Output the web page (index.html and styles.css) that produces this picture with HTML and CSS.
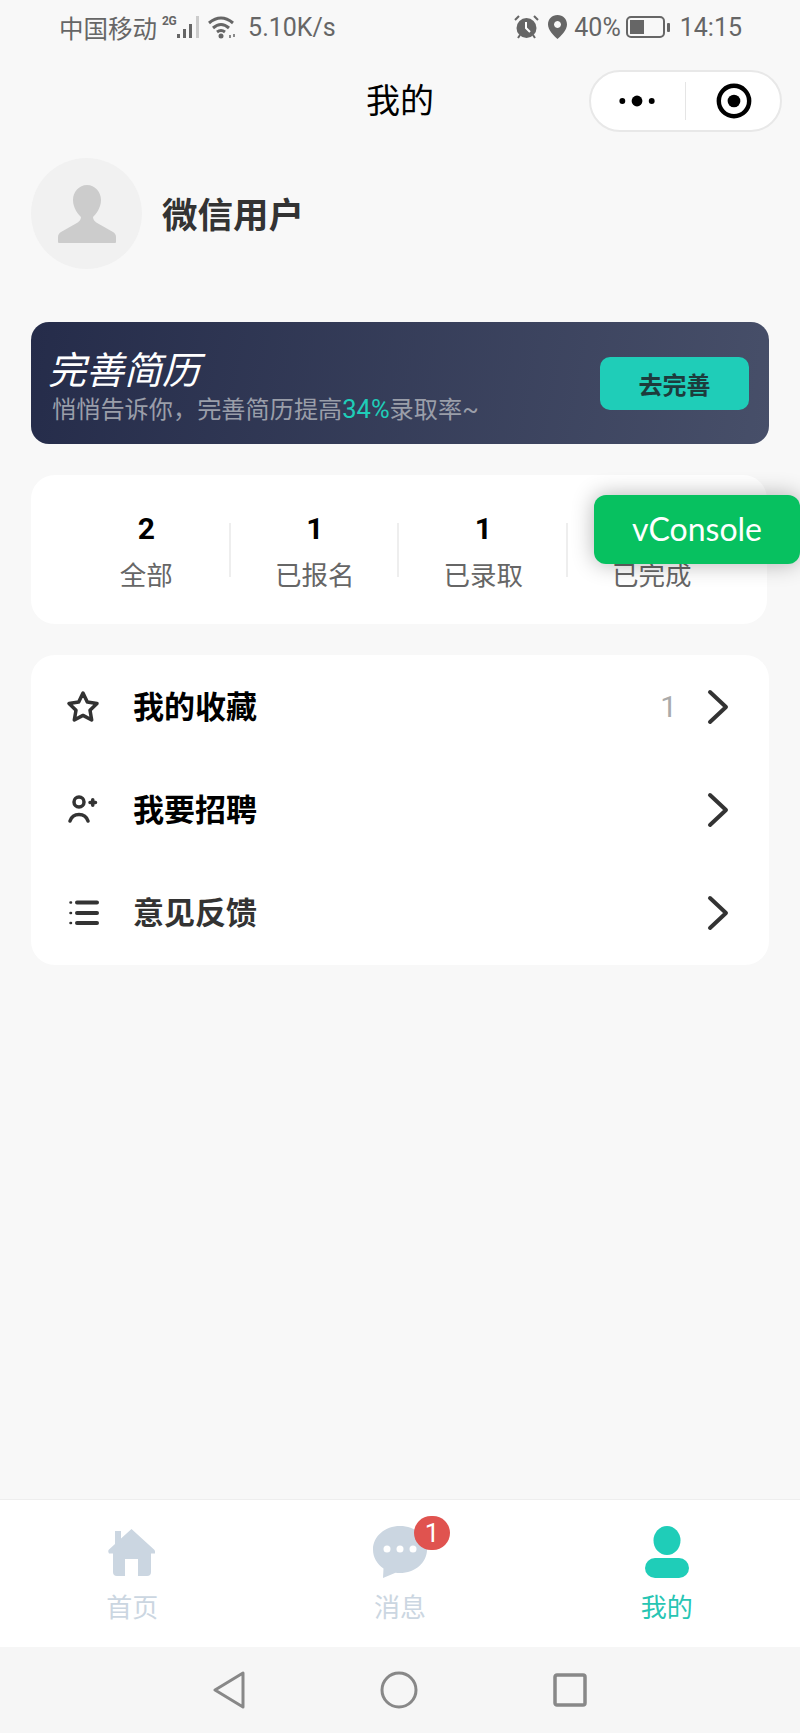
FILE: index.html
```html
<!DOCTYPE html>
<html lang="zh-CN">
<head>
    <meta charset="UTF-8">
    <meta name="viewport" content="width=device-width, initial-scale=1.0">
    <title>我的</title>
    <link rel="stylesheet" href="styles.css">
</head>
<body>
<div class="page">
    <div class="status-bar">
        <div class="status-group">
            <span class="carrier">中国移动</span>
            <span class="net-type">2G</span>
            <svg class="ic-signal" width="23" height="24" viewBox="0 0 23 24">
                <rect x="0" y="19" width="3" height="4" fill="#666"/>
                <rect x="6" y="14" width="3" height="9" fill="#666"/>
                <rect x="12" y="9" width="3" height="14" fill="#666"/>
                <rect x="19" y="1" width="3" height="22" fill="#ccc"/>
            </svg>
            <svg class="ic-wifi" width="28" height="24" viewBox="0 0 28 24" fill="none" stroke="#666" stroke-width="3">
                <path d="M1 8 Q13 -2 25 8"/>
                <path d="M5 13 Q13 6 21 13"/>
                <path d="M9 17 Q13 14 17 17"/>
                <circle cx="13" cy="21" r="2.5" fill="#666" stroke="none"/>
                <path d="M22 20 v3 M26 19 v3" stroke-width="1.5"/>
            </svg>
            <span class="speed">5.10K/s</span>
        </div>
        <div class="status-group">
            <svg class="ic-alarm" width="25" height="24" viewBox="0 0 25 24">
                <circle cx="12.5" cy="13" r="10" fill="#666"/>
                <path d="M12 7 V13 L16 17" stroke="#fff" stroke-width="2" fill="none"/>
                <path d="M1 5 L5 1 M24 5 L20 1 M4 23 L6 20 M21 23 L19 20" stroke="#666" stroke-width="2"/>
            </svg>
            <svg class="ic-pin" width="19" height="24" viewBox="0 0 19 24">
                <path fill-rule="evenodd" fill="#666" d="M9.5 0 C15 0 19 4 19 9.5 C19 15 13 21 9.5 24 C6 21 0 15 0 9.5 C0 4 4 0 9.5 0Z M9.5 6 a3.5 3.5 0 1 0 .01 0Z"/>
            </svg>
            <span class="battery-text">40%</span>
            <svg class="ic-battery" width="44" height="24" viewBox="0 0 44 24">
                <rect x="1" y="2" width="37" height="20" rx="4" fill="none" stroke="#666" stroke-width="2"/>
                <rect x="4" y="5" width="14" height="14" fill="#666"/>
                <rect x="41" y="8" width="3" height="9" rx="1" fill="#666"/>
            </svg>
            <span class="clock">14:15</span>
        </div>
    </div>

    <div class="title-bar">
        <span></span>
        <h1 class="title">我的</h1>
        <div class="capsule">
            <svg width="96" height="60" viewBox="0 0 96 60">
                <circle cx="32" cy="30" r="3" fill="#000"/>
                <circle cx="47" cy="30" r="5.5" fill="#000"/>
                <circle cx="62" cy="30" r="3" fill="#000"/>
            </svg>
            <i class="capsule-line"></i>
            <svg width="96" height="60" viewBox="0 0 96 60">
                <circle cx="49" cy="30" r="15.5" fill="none" stroke="#000" stroke-width="4.5"/>
                <circle cx="49" cy="30" r="6.5" fill="#000"/>
            </svg>
        </div>
    </div>

    <main class="content">
        <section class="profile">
            <div class="avatar">
                <svg width="58" height="58" viewBox="0 0 58 58">
                    <path fill="#ccc" d="M29 0 C37 0 43 7 43 15 C43 23 38 29 35 32 C35 35 37 37 40 38.500 L55 47 C57 48 58 50 58 52 V57 Q58 58 57 58 H1 Q0 58 0 57 V52 C0 50 1 48 3 47 L18 38.500 C21 37 23 35 23 32 C20 29 15 23 15 15 C15 7 21 0 29 0Z"/>
                </svg>
            </div>
            <span class="user-name">微信用户</span>
        </section>

        <section class="resume-banner">
            <div class="resume-info">
                <div class="resume-title">完善简历</div>
                <div class="resume-sub">悄悄告诉你，完善简历提高<span class="accent">34%</span>录取率~</div>
            </div>
            <button class="resume-btn">去完善</button>
        </section>

        <section class="stats">
            <div class="stat"><b>2</b><span>全部</span></div>
            <div class="stat"><b>1</b><span>已报名</span></div>
            <div class="stat"><b>1</b><span>已录取</span></div>
            <div class="stat"><b>1</b><span>已完成</span></div>
        </section>

        <section class="menu">
            <div class="menu-row">
                <svg class="menu-icon" width="36" height="34" viewBox="0 0 36 34" fill="none" stroke="#333" stroke-width="3.500" stroke-linejoin="round">
                    <path d="M18 3 L22.300 12 32 13.400 25 20.200 26.700 30 18 25.400 9.300 30 11 20.200 4 13.400 13.700 12Z"/>
                </svg>
                <span class="menu-text">我的收藏</span>
                <span class="menu-count">1</span>
                <svg class="chevron" width="22" height="36" viewBox="0 0 22 36" fill="none" stroke="#333" stroke-width="4" stroke-linecap="round" stroke-linejoin="round">
                    <path d="M3 3 L19 18 3 33"/>
                </svg>
            </div>
            <div class="menu-row">
                <svg class="menu-icon" width="36" height="34" viewBox="0 0 36 34" fill="none" stroke="#333" stroke-width="3.500" stroke-linecap="round">
                    <circle cx="14" cy="9" r="5"/>
                    <path d="M5 28 a9.500 9.500 0 0 1 18 0"/>
                    <path d="M25 9.500 h5.500 M27.750 6.750 v5.500"/>
                </svg>
                <span class="menu-text">我要招聘</span>
                <svg class="chevron" width="22" height="36" viewBox="0 0 22 36" fill="none" stroke="#333" stroke-width="4" stroke-linecap="round" stroke-linejoin="round">
                    <path d="M3 3 L19 18 3 33"/>
                </svg>
            </div>
            <div class="menu-row">
                <svg class="menu-icon" width="36" height="34" viewBox="0 0 36 34" fill="none" stroke="#333" stroke-width="4" stroke-linecap="round">
                    <path d="M12 6.500 H32 M12 17 H32 M12 27 H32"/>
                    <path d="M5.500 6.500 h.5 M5.500 17 h.5 M5.500 27 h.5" stroke-width="2.500"/>
                </svg>
                <span class="menu-text menu-text-soft">意见反馈</span>
                <svg class="chevron" width="22" height="36" viewBox="0 0 22 36" fill="none" stroke="#333" stroke-width="4" stroke-linecap="round" stroke-linejoin="round">
                    <path d="M3 3 L19 18 3 33"/>
                </svg>
            </div>
        </section>
    </main>

    <nav class="tabbar">
        <div class="tab">
            <svg class="tab-icon tab-icon-home" width="47" height="52" viewBox="0 0 47 52">
                <path fill="#cbd6e1" d="M23.500 3 L46 23.500 Q47.500 25 47 27.500 H43 V46 Q43 50 39 50 H30 V33 H17 V50 H9 Q5 50 5 46 V27.500 H1 Q-.5 25 1 23.500 L7 18 V5 H13 V12.500Z"/>
            </svg>
            <span>首页</span>
        </div>
        <div class="tab">
            <div class="tab-icon-wrap">
                <svg class="tab-icon" width="54" height="52" viewBox="0 0 54 52">
                    <path fill="#cbd6e1" d="M27 0 C42 0 54 10.500 54 23.500 C54 36.500 42 47 27 47 C25.500 47 24 46.900 22.500 46.700 L10 52 L10.500 42.500 C4 38 0 31.500 0 23.500 C0 10.500 12 0 27 0Z"/>
                    <circle cx="14" cy="23" r="3.500" fill="#fff"/>
                    <circle cx="27" cy="23" r="3.500" fill="#fff"/>
                    <circle cx="40" cy="23" r="3.500" fill="#fff"/>
                </svg>
                <span class="badge">1</span>
            </div>
            <span>消息</span>
        </div>
        <div class="tab tab-active">
            <svg class="tab-icon" width="44" height="52" viewBox="0 0 44 52">
                <ellipse cx="22" cy="14.500" rx="13.500" ry="14.500" fill="#1fcdb8"/>
                <rect x="0" y="32" width="44" height="20" rx="10" fill="#1fcdb8"/>
            </svg>
            <span>我的</span>
        </div>
    </nav>

    <div class="sys-nav">
        <svg width="32" height="38" viewBox="0 0 32 38" fill="none" stroke="#888" stroke-width="3" stroke-linejoin="round">
            <path d="M30 2 V36 L2 19Z"/>
        </svg>
        <svg width="38" height="38" viewBox="0 0 38 38" fill="none" stroke="#888" stroke-width="3">
            <circle cx="19" cy="19" r="17"/>
        </svg>
        <svg width="34" height="34" viewBox="0 0 34 34" fill="none" stroke="#888" stroke-width="3.500" stroke-linejoin="round">
            <rect x="2" y="2" width="30" height="30" rx="2"/>
        </svg>
    </div>

    <div class="vconsole">vConsole</div>
</div>
</body>
</html>
```

FILE: styles.css
```css
* { box-sizing: border-box; }
html, body { margin: 0; padding: 0; }
body { font-family: Roboto, "Noto Sans CJK SC", sans-serif; background: #f8f8f8; color: #333; }

.page { position: relative; display: flex; flex-direction: column; width: 800px; height: 1733px; overflow: hidden; }

/* status bar */
.status-bar { display: flex; justify-content: space-between; align-items: center; height: 54px; padding: 0 58px 0 59px; color: #666; font-size: 25px; }
.carrier { font-size: 24.500px; }
.status-group { display: flex; align-items: center; }
.net-type { align-self: flex-start; margin: 5px 0 0 5px; font-size: 12px; font-weight: 700; line-height: 12px; letter-spacing: -.5px; }
.ic-signal { margin-left: 1px; }
.ic-wifi { margin-left: 8px; }
.speed { margin-left: 12px; }
.ic-pin { margin-left: 9px; }
.battery-text { margin-left: 7px; }
.ic-battery { margin-left: 5px; }
.clock { margin-left: 10px; }

/* title */
.title-bar { display: grid; grid-template-columns: 1fr auto 1fr; align-items: center; height: 92px; padding: 0 18px; }
.title { margin: 0 0 4px; font-size: 34px; font-weight: 400; color: #000; }
.capsule { justify-self: end; display: flex; align-items: center; width: 193px; height: 62px; margin-top: 2px; border: 2px solid #e8e8e8; border-radius: 31px; background: #fff; }
.capsule-line { width: 1px; height: 38px; background: #e5e5e5; }

.content { flex: 1; padding: 12px 31px 0; }

/* profile */
.profile { display: flex; align-items: center; gap: 20px; }
.avatar { display: flex; align-items: center; justify-content: center; width: 111px; height: 111px; border-radius: 50%; background: #f1f1f1; }
.user-name { margin-bottom: 3px; font-size: 35.500px; font-weight: 700; color: #333; }

/* banner */
.resume-banner { display: flex; align-items: center; justify-content: space-between; height: 122px; margin-top: 53px; padding: 0 20px 0 17px; border-radius: 18px; background: linear-gradient(100deg, #252c4a, #474f69); }
.resume-info { padding-top: 8px; }
.resume-title { font-size: 38px; line-height: 44px; font-style: italic; color: #fff; }
.resume-sub { margin-left: 4px; font-size: 24.200px; line-height: 32px; color: #9a9ea9; }
.accent { color: #1fcdb8; font-size: 25.500px; }
.resume-btn { width: 149px; height: 53px; padding: 0; border: 0; border-radius: 10px; background: #1fcdb8; color: #1d3b3c; font-family: inherit; font-size: 24px; font-weight: 700; }

/* stats */
.stats { display: flex; width: 736px; height: 149px; margin-top: 31px; padding: 0 31px; border-radius: 24px; background: #fff; }
.stat { position: relative; flex: 1; display: flex; flex-direction: column; align-items: center; padding-top: 34px; }
.stat b { font-size: 30px; line-height: 40px; color: #000; }
.stat span { margin-top: 7px; font-size: 26.500px; line-height: 40px; color: #666; }
.stat + .stat::before { content: ""; position: absolute; left: -2px; top: 48px; width: 2px; height: 54px; background: #eee; }

/* menu */
.menu { height: 310px; margin-top: 31px; border-radius: 24px; background: #fff; }
.menu-row { display: flex; align-items: center; height: 103px; padding: 0 40px 0 34px; }
.menu-text { margin: 0 0 4px 32px; font-size: 31px; font-weight: 700; color: #000; }
.menu-text-soft { color: #333; }
.menu-count { margin-left: auto; font-size: 30px; color: #aaa; }
.chevron { margin-left: auto; }
.menu-count + .chevron { margin-left: 30px; }

/* tabs */
.tabbar { display: flex; height: 148px; border-top: 1px solid #eee; background: #fff; }
.tab { flex: 1; display: flex; flex-direction: column; align-items: center; padding-top: 26px; color: #cbd6e1; font-size: 26px; line-height: 30px; }
.tab-active { color: #27c5b3; }
.tab-icon { display: block; }
.tab-icon-home { margin-right: 4px; }
.tab-icon-wrap { position: relative; }
.tab > span { margin-top: 15px; }
.tab:first-child > span { margin-right: 2px; }
.badge { position: absolute; left: 41px; top: -10px; width: 36px; height: 34px; border-radius: 17px; background: #e0534f; color: #fff; font-size: 26px; line-height: 34px; text-align: center; }

/* system nav */
.sys-nav { display: flex; align-items: center; justify-content: center; gap: 135px; height: 86px; background: #f6f6f6; }

/* floating */
.vconsole { position: absolute; right: 0; top: 495px; width: 206px; height: 69px; border-radius: 12px; background: #07c160; box-shadow: 0 0 22px rgba(0, 0, 0, .3); color: #fff; font-family: Lato, sans-serif; font-size: 32px; line-height: 67px; text-align: center; }
```
